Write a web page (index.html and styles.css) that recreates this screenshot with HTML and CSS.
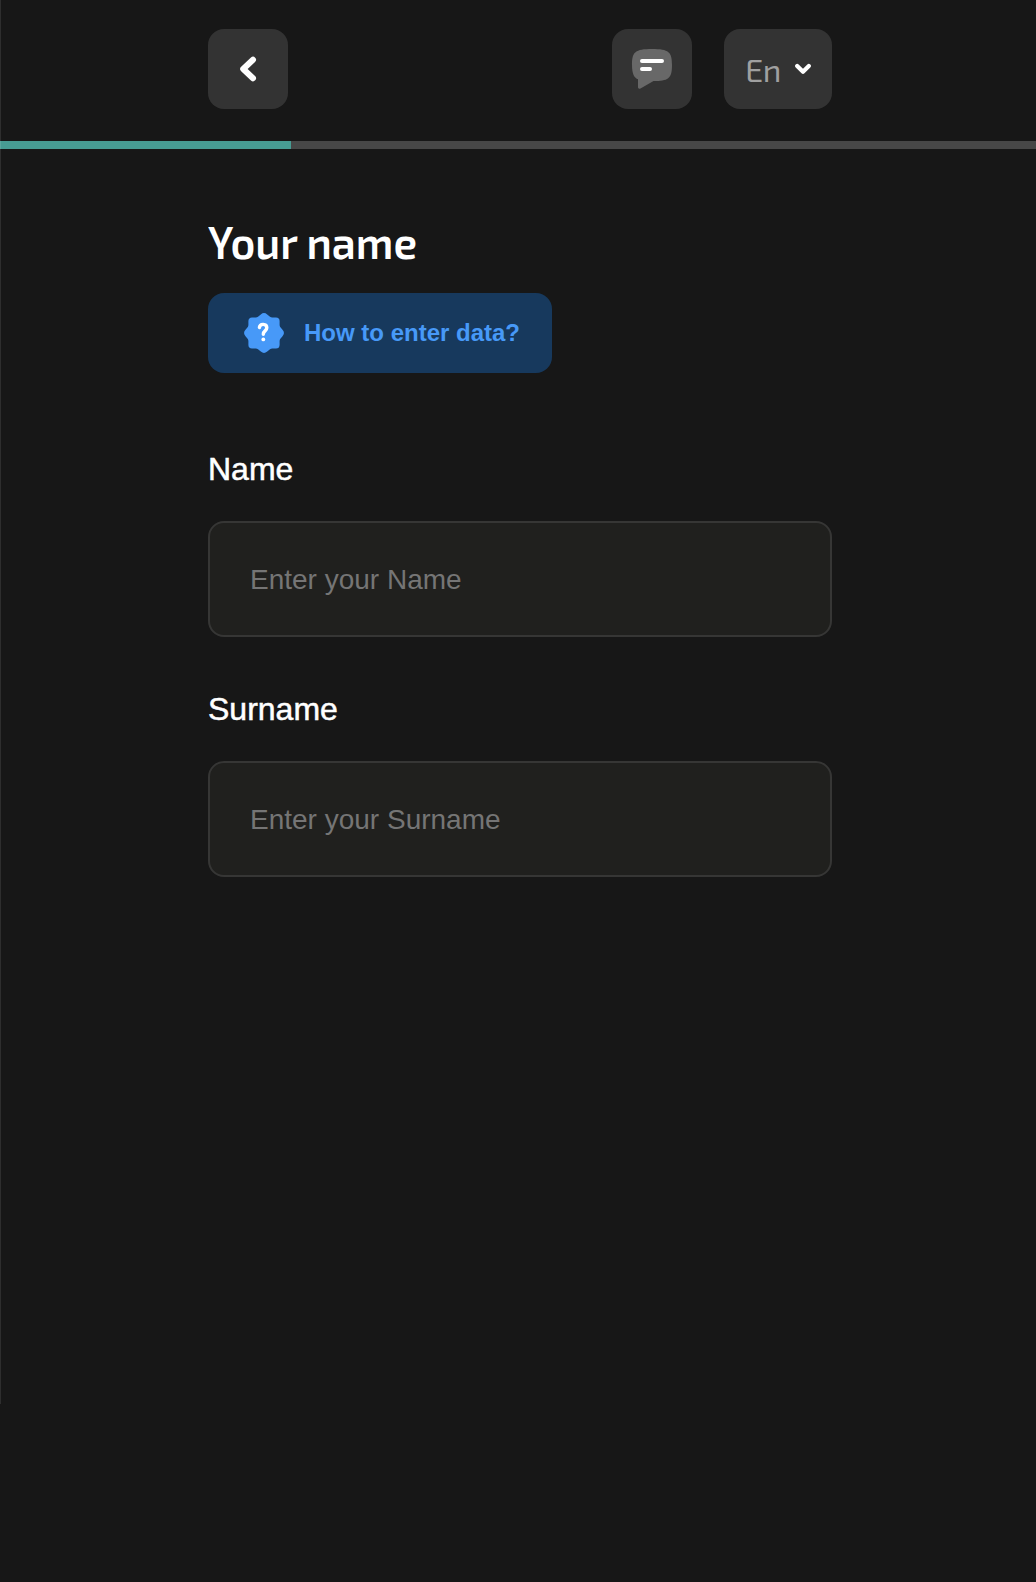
FILE: index.html
```html
<!DOCTYPE html>
<html lang="en">
<head>
<meta charset="utf-8">
<title>Your name</title>
<link rel="stylesheet" href="styles.css">
</head>
<body>
<div class="edge"></div>
<header class="header">
  <button class="btn back" aria-label="Back">
    <svg width="80" height="80" viewBox="0 0 80 80"><path d="M45 30.8 35.2 40 45 49.2" fill="none" stroke="#fff" stroke-width="6" stroke-linecap="round" stroke-linejoin="round"/></svg>
  </button>
  <div class="actions">
    <button class="btn chat" aria-label="Chat">
      <svg width="80" height="80" viewBox="0 0 80 80"><path d="M26 50.2C22.5 49.3 20 45 20 36C20 23 23 20 40 20S60 23 60 36C60 50 56 52 41.5 52L28.5 59.4C27 60.2 26 59.5 26 58Z" fill="#686868"/><path d="M30 32H50M30 40H38" stroke="#fff" stroke-width="4" stroke-linecap="round"/></svg>
    </button>
    <button class="btn lang"><span class="lang-text">En</span>
      <svg width="16" height="12" viewBox="0 0 16 12"><path d="M2.2 3 8 8.8 13.8 3" fill="none" stroke="#fff" stroke-width="4.2" stroke-linecap="round" stroke-linejoin="round"/></svg>
    </button>
  </div>
</header>
<div class="progress"><div class="progress-fill"></div></div>
<main class="content">
  <h1 class="title">Your name</h1>
  <button class="help">
    <svg width="40" height="40" viewBox="0 0 40 40"><path d="M16.8 1.5Q20-1.4 23.2 1.5L26 3.8Q27 4.4 28.2 4.4H32Q35.6 4.6 35.6 8V11.8Q35.6 13 36.2 14L38.5 16.8Q41.4 20 38.5 23.2L36.2 26Q35.6 27 35.6 28.2V32Q35.4 35.6 32 35.6H28.2Q27 35.6 26 36.2L23.2 38.5Q20 41.4 16.8 38.5L14 36.2Q13 35.6 11.8 35.6H8Q4.4 35.4 4.4 32V28.2Q4.4 27 3.8 26L1.5 23.2Q-1.4 20 1.5 16.8L3.8 14Q4.4 13 4.4 11.8V8Q4.6 4.4 8 4.4H11.8Q13 4.4 14 3.8Z" fill="#4799f8"/><path d="M15.4 14.5C15.8 10.2 22.8 10.3 22.8 14.8C22.8 18 19.3 17.8 19.3 21.2" fill="none" stroke="#fff" stroke-width="3.4" stroke-linecap="round"/><circle cx="19.3" cy="26.4" r="1.9" fill="#fff"/></svg>
    <span>How to enter data?</span>
  </button>
  <form class="form">
    <div class="field"><label class="label" for="name">Name</label><input class="input" id="name" placeholder="Enter your Name"></div>
    <div class="field"><label class="label" for="surname">Surname</label><input class="input" id="surname" placeholder="Enter your Surname"></div>
  </form>
</main>
</body>
</html>
```
FILE: styles.css
```css
* { box-sizing: border-box; }
body { margin: 0; min-height: 1582px; background: #171717; color: #fff; font-family: "Liberation Sans", Arial, sans-serif; }
button { border: 0; padding: 0; font: inherit; }
svg { display: block; flex: none; }
.edge { position: absolute; left: 0; top: 0; width: 1px; height: 1404px; background: rgba(255, 255, 255, .1); }
.header { width: 624px; height: 141px; margin-left: 208px; padding-top: 29px; display: flex; justify-content: space-between; }
.actions { display: flex; gap: 32px; }
.btn { width: 80px; height: 80px; border-radius: 16px; background: #333; display: flex; align-items: center; }
.lang { width: 108px; padding-left: 21px; gap: 14px; }
.lang-text { width: 36px; padding-bottom: 1px; font: 400 32px/40px "Exo 2", "Noto Sans", sans-serif; letter-spacing: -.4px; color: #a0a0a0; }
.progress { height: 8px; background: #474747; }
.progress-fill { width: 291px; height: 8px; background: #479c93; }
.content { width: 624px; margin-left: 208px; padding-top: 64px; }
.title { margin: 0; height: 80px; font: 600 46px/56px "Exo 2", "Noto Sans", sans-serif; transform: scaleX(.93); transform-origin: 0 0; white-space: nowrap; }
.help { width: 344px; height: 80px; padding-left: 36px; display: flex; align-items: center; gap: 20px; border-radius: 16px; background: #17395d; color: #4799f8; font-size: 24px; font-weight: 700; white-space: nowrap; }
.form { padding-top: 76px; display: flex; flex-direction: column; gap: 52px; }
.field { display: flex; flex-direction: column; gap: 32px; }
.label { font-size: 32px; line-height: 40px; -webkit-text-stroke: .5px #fff; }
.input { width: 624px; height: 116px; padding: 1px 40px 0; border: 2px solid #363635; border-radius: 16px; background: #20201e; color: #fff; font: 28px "Liberation Sans", Arial, sans-serif; outline: none; }
.input::placeholder { color: #757575; opacity: 1; }
```
